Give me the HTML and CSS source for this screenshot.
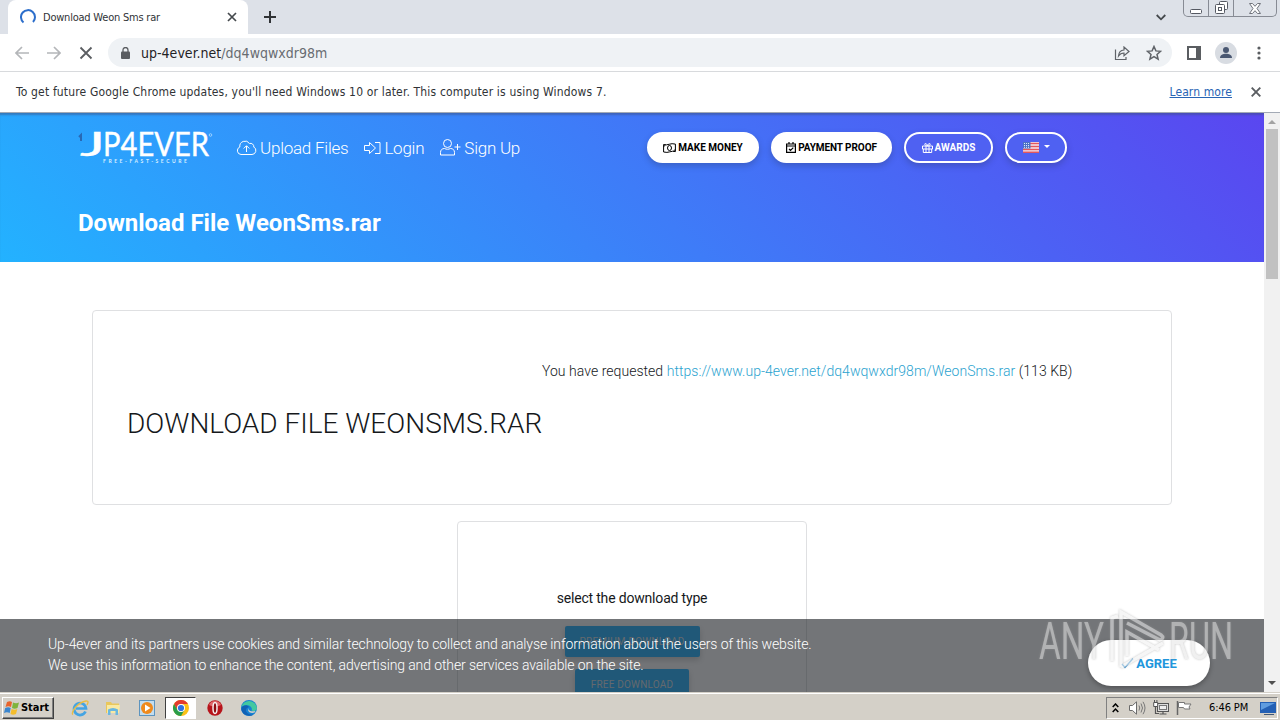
FILE: index.html
```html
<!DOCTYPE html>
<html lang="en">
<head>
    <meta charset="UTF-8">
    <meta name="viewport" content="width=device-width, initial-scale=1.0">
    <title>Download Weon Sms rar</title>
    <link rel="stylesheet" href="styles.css">
</head>
<body>
    <!-- Browser chrome -->
    <div class="tabstrip">
        <div class="tab">
            <svg class="spinner" width="16" height="16" viewBox="0 0 16 16"><path d="M3.5 13.5A7 7 0 1 1 13 13" fill="none" stroke="#2c6ecb" stroke-width="2"/></svg>
            <span class="tab-title">Download Weon Sms rar</span>
            <svg width="10" height="10" viewBox="0 0 10 10"><path d="M1 1l8 8M9 1L1 9" stroke="#45494d" stroke-width="1.7"/></svg>
        </div>
        <svg class="new-tab" width="12" height="12" viewBox="0 0 12 12"><path d="M6 0v12M0 6h12" stroke="#303336" stroke-width="2"/></svg>
        <svg class="tab-search" width="10" height="7" viewBox="0 0 10 7"><path d="M.7 1L5 5.3 9.3 1" fill="none" stroke="#45494d" stroke-width="1.8"/></svg>
        <div class="window-controls">
            <div class="control"><svg width="12" height="5" viewBox="0 0 12 5"><rect x=".5" y=".5" width="11" height="4" rx="1" fill="#fff" stroke="#555962"/></svg></div>
            <div class="control"><svg width="13" height="13" viewBox="0 0 13 13"><g fill="#fff" stroke="#555962"><rect x="4.5" y=".5" width="8" height="8" rx="1"/><rect x=".5" y="3.5" width="9" height="9" rx="1"/><rect x="3.5" y="6.5" width="3" height="3"/></g></svg></div>
            <div class="control close"><svg width="12" height="11" viewBox="0 0 12 11"><path d="M.5.5h3L6 3.3 8.5.5h3L8 5.5l3.5 5h-3L6 7.7 3.5 10.5h-3L4 5.5z" fill="#fff" stroke="#70747c"/></svg></div>
        </div>
    </div>
    <div class="toolbar">
        <svg class="nav-icon" width="14" height="14" viewBox="0 0 14 14"><path d="M14 7H1.5M7 1L1 7l6 6" fill="none" stroke="#b4b6b9" stroke-width="1.7"/></svg>
        <svg class="nav-icon" width="14" height="14" viewBox="0 0 14 14"><path d="M0 7h12.5M7 1l6 6-6 6" fill="none" stroke="#b4b6b9" stroke-width="1.7"/></svg>
        <svg class="nav-icon" width="14" height="14" viewBox="0 0 14 14"><path d="M1.5 1.5l11 11M12.5 1.5l-11 11" stroke="#5a5d61" stroke-width="1.8"/></svg>
        <div class="omnibox">
            <svg width="9" height="12" viewBox="0 0 9 12"><path d="M2 5V3a2.500 2.500 0 0 1 5 0v2" fill="none" stroke="#5a5d61" stroke-width="1.3"/><rect y="4.5" width="9" height="7.5" rx="1" fill="#5a5d61"/></svg>
            <span class="url">up-4ever.net<span class="path">/dq4wqwxdr98m</span></span>
            <svg width="16" height="14" viewBox="0 0 16 14"><g fill="none" stroke="#5f6368" stroke-width="1.2"><path d="M1.5 3.5v10H12V11"/><path d="M4.500 10c.3-4 2-5.800 5.500-6V1l5 4.500-5 4.200V7c-2.500 0-4 .8-5.500 3z"/></g></svg>
            <svg class="star" width="16" height="16" viewBox="0 0 16 16"><path d="M8 1.500l1.900 4.400 4.700.4-3.600 3.200 1.100 4.700L8 11.700l-4.100 2.500L5 9.500 1.400 6.300l4.700-.4z" fill="none" stroke="#5f6368" stroke-width="1.5"/></svg>
        </div>
        <svg class="side-panel" width="14" height="14" viewBox="0 0 14 14"><rect x="1" y="1" width="12" height="12" fill="none" stroke="#5a5d61" stroke-width="2"/><path d="M9 1h4v12H9z" fill="#5a5d61"/></svg>
        <svg class="avatar" width="22" height="22" viewBox="0 0 22 22"><circle cx="11" cy="11" r="11" fill="#d8dce2"/><circle cx="11" cy="8" r="3" fill="#4a5872"/><path d="M5 16c0-3 3-4.300 6-4.300s6 1.300 6 4.300z" fill="#4a5872"/></svg>
        <svg class="menu" width="4" height="14" viewBox="0 0 4 14"><g fill="#5a5d61"><circle cx="2" cy="2" r="1.600"/><circle cx="2" cy="7" r="1.600"/><circle cx="2" cy="12" r="1.600"/></g></svg>
    </div>
    <div class="infobar">
        <span class="message">To get future Google Chrome updates, you'll need Windows 10 or later. This computer is using Windows 7.</span>
        <a class="learn" href="#">Learn more</a>
        <svg width="10" height="10" viewBox="0 0 10 10"><path d="M.7.7l8.600 8.600M9.300.7L.7 9.300" stroke="#5a5d61" stroke-width="1.9"/></svg>
    </div>

    <!-- Page -->
    <div class="viewport">
        <div class="page">
            <header class="hero">
                <nav class="navbar">
                    <svg class="logo" width="136" height="34" viewBox="0 0 136 34">
                        <path d="M1 6l2-2v6" fill="none" stroke="#2869b5" stroke-width="2"/>
                        <text class="logo-name" x="2" y="25" textLength="25" lengthAdjust="spacingAndGlyphs">J</text>
                        <text class="logo-name" x="25" y="25" textLength="106" lengthAdjust="spacingAndGlyphs">P4EVER</text>
                        <text class="logo-tag" x="25" y="32" textLength="84">FREE-FAST-SECURE</text>
                        <circle cx="132.500" cy="4" r="1.300" fill="none" stroke="#bfe3ff" stroke-width=".7"/>
                    </svg>
                    <a class="nav-link upload" href="#"><svg width="21" height="16" viewBox="0 0 21 16"><g fill="none" stroke="#fff"><path d="M5 14.500h11a4 4 0 0 0 1.800-7.500A3.300 3.300 0 0 0 13.500 3.500 5.300 5.300 0 0 0 3.800 7 3.900 3.900 0 0 0 5 14.500z"/><path d="M10.500 12V6M7.700 8.500l2.800-2.800 2.800 2.800"/></g></svg>Upload Files</a>
                    <a class="nav-link login" href="#"><svg width="17" height="14" viewBox="0 0 17 14"><g fill="none" stroke="#fff"><path d="M.5 4.500h5v-3L11.500 7l-6 5.500v-3h-5z"/><path d="M11 1.500h5v11h-5"/></g></svg>Login</a>
                    <a class="nav-link signup" href="#"><svg width="21" height="17" viewBox="0 0 21 17"><g fill="none" stroke="#fff"><circle cx="7.500" cy="4.500" r="4"/><path d="M4.500 9.500c-2.500 0-4 1.500-4 4v2.500h14v-2.500c0-2.500-1.500-4-4-4-2 1-4 1-6 0zM17.500 5v6M14.500 8h6"/></g></svg>Sign Up</a>
                    <div class="nav-buttons">
                        <a class="btn money" href="#"><svg width="13" height="10" viewBox="0 0 13 10"><g fill="none" stroke="#000"><path d="M.6 1.500c4 1.500 7-2 11.800-.4v7.500c-4-1.500-7 2-11.800.4z"/><ellipse cx="6.500" cy="5" rx="2" ry="2.500"/><path d="M.6 3.500l2-1.500M12.400 6.500l-2 1.500"/></g></svg>Make Money</a>
                        <a class="btn proof" href="#"><svg width="10" height="11" viewBox="0 0 10 11"><path d="M.6 2h8.800v8.400H.6zM.6 4h8.800M3 0v2.500M7 0v2.500M3 7l1.500 1.500L7.300 5.700" fill="none" stroke="#000" stroke-width="1.200"/></svg>Payment Proof</a>
                        <a class="btn outline awards" href="#"><svg width="11" height="10" viewBox="0 0 11 10"><path d="M.5 3h10v3H.5zM1.300 6v3.500h8.400V6M4 3v6.500M7 3v6.500M5.500 3C3 3 2 .5 3.500.5S5.500 3 5.500 3s.5-2.500 2-2.500S8 3 5.500 3z" fill="none" stroke="#fff"/></svg>Awards</a>
                        <a class="btn outline lang" href="#"><svg width="16" height="11" viewBox="0 0 16 11"><rect width="16" height="11" fill="#f5e9ee"/><path d="M7 1.500h9M7 4.500h9M0 7.500h16M0 10.200h16" stroke="#e2575e" stroke-width="1.400"/><rect width="7.500" height="6.500" fill="#4c72c4"/><path d="M1 1.500h6M1 3.500h6M1 5.300h6" stroke="#dfe8ff" stroke-dasharray="1 1"/></svg><span class="caret"></span></a>
                    </div>
                </nav>
                <h1>Download File WeonSms.rar</h1>
            </header>
            <main>
                <section class="card file-card">
                    <h2>Download File WeonSms.rar</h2>
                    <p>You have requested <a href="#">https://www.up-4ever.net/dq4wqwxdr98m/WeonSms.rar</a> (113 KB)</p>
                </section>
                <section class="card type-card">
                    <p>select the download type</p>
                    <button class="download premium">Premium Download</button>
                    <button class="download free">Free Download</button>
                </section>
            </main>
            <div class="cookies">
                <p>Up-4ever and its partners use cookies and similar technology to collect and analyse information about the users of this website.<br>We use this information to enhance the content, advertising and other services available on the site.</p>
                <button class="agree"><svg width="13" height="12" viewBox="0 0 13 12"><path d="M1 7l3 3.500L12 1.500" fill="none" stroke="#4f9bd1" stroke-width="1.400"/></svg>Agree</button>
            </div>
        </div>
        <div class="scrollbar">
            <span class="arrow up"></span>
            <span class="thumb"></span>
            <span class="arrow down"></span>
        </div>
    </div>

    <!-- Taskbar -->
    <footer class="taskbar">
        <div class="start">
            <svg width="16" height="16" viewBox="0 0 16 16"><path d="M3 2q3-1.500 5 0L7 7q-2.500-1.500-5.500 0z" fill="#e8642c"/><path d="M9 2.500q3 1.500 6 0L13.500 8q-3 1.500-5.500 0z" fill="#7fb43c"/><path d="M1.200 8q3-1.500 5.500 0l-1 5Q3 11.500 0 13z" fill="#3b86cf"/><path d="M7.600 9q3 1.500 5.700 0L12 14q-3 1.500-5.500 0z" fill="#f4bd2c"/></svg>Start
        </div>
        <svg class="task ie" width="18" height="18" viewBox="0 0 18 18"><path d="M14.500 12.500A6 6 0 1 1 15 9.500H5" fill="none" stroke="#44a4e3" stroke-width="2.700"/><path d="M2 15.500C-1 14 7 3 15 2c3-.2 2 2 1 4" fill="none" stroke="#e9bd45" stroke-width="1.400"/></svg>
        <svg class="task folder" width="16" height="16" viewBox="0 0 16 16"><path d="M1 2h5l1 1.500h7V13H1z" fill="#e9c75c"/><path d="M2 5h13l-1 8H2z" fill="#f9e9a2"/><path d="M3 15V9.500q5-3 10 0V15h-2.500v-4h-5v4z" fill="#69b7e0"/></svg>
        <svg class="task player" width="16" height="16" viewBox="0 0 16 16"><rect x=".5" y=".5" width="15" height="15" fill="#c3ddef" stroke="#5d94bf"/><circle cx="8" cy="8" r="6" fill="#ef8a1d"/><path d="M6 4.500v7L11.500 8z" fill="#fff"/></svg>
        <div class="task-active">
            <svg width="16" height="16" viewBox="0 0 16 16"><circle cx="8" cy="8" r="8" fill="#fbc116"/><path d="M1.070 4A8 8 0 0 1 14.930 4H8L4.500 10z" fill="#e33b2e"/><path d="M1.070 4A8 8 0 0 0 8 16l3.500-6L8 11.500 4.500 10z" fill="#2a9d4a"/><circle cx="8" cy="8" r="4" fill="#fff"/><circle cx="8" cy="8" r="3.100" fill="#2f73e0"/></svg>
        </div>
        <svg class="task opera" width="16" height="16" viewBox="0 0 16 16"><circle cx="8" cy="8" r="7.700" fill="#b7141b"/><path d="M2 5a6.500 6.500 0 0 1 12 0q-6 3-12 0z" fill="#df686b"/><ellipse cx="8" cy="8" rx="2" ry="5.500" fill="#8c0c10" stroke="#f5eeee" stroke-width="1.500"/></svg>
        <svg class="task edge" width="16" height="16" viewBox="0 0 16 16"><circle cx="8" cy="8" r="8" fill="#1682d3"/><path d="M.3 7A8 8 0 0 1 16 8c0 3-4 3.500-5.500 2.500C12 8 9 5 6 5.300 3 5.500 1 6 .3 7z" fill="#43c8a0"/><path d="M6 8c-3 3 1 7.500 6.500 6.500A8 8 0 0 1 .2 9C1 5 6 4 8 7z" fill="#1262b5"/><path d="M8 7.500c-1.500 2 .5 4.500 6.500 3.500l-1 1.500C9 14 5.500 11 8 7.500z" fill="#d4d0c8"/></svg>
        <div class="tray">
            <svg class="expand" width="7" height="10" viewBox="0 0 7 10"><path d="M.7 4l2.800-3 2.800 3M.7 9l2.800-3 2.800 3" fill="none" stroke="#000" stroke-width="1.500"/></svg>
            <svg class="volume" width="17" height="14" viewBox="0 0 17 14"><path d="M.5 4.500h3L7.500.8v12.400l-4-3.700h-3z" fill="#fff" stroke="#6b6b6b"/><path d="M10 4.500q1.500 2.500 0 5M12 2.500q3 4.500 0 9M14 .8q4 6.200 0 12.400" fill="none" stroke="#777"/></svg>
            <svg class="network" width="16" height="15" viewBox="0 0 16 15"><rect x="4.500" y="3.500" width="11" height="8" fill="#ddd" stroke="#555"/><rect x="6.500" y="5.500" width="7" height="4" fill="#eee" stroke="#777"/><path d="M6.500 14h7M10 11.500V14M2.500 7v6.500H6" fill="none" stroke="#555" stroke-width="1.200"/><path d="M.7 2.500h4v4h-4zM1.500 0v2.500M3.900 0v2.500" fill="#fff" stroke="#555"/></svg>
            <svg class="flag" width="16" height="14" viewBox="0 0 16 14"><path d="M1.500 0v14" stroke="#666" stroke-width="1.500"/><path d="M2.500 1.500h6v1.500h6.500l-2 3 1 2H8.500L7.500 6.500h-5z" fill="#fff" stroke="#777"/></svg>
            <span class="clock">6:46 PM</span>
            <svg class="desktop" width="16" height="14" viewBox="0 0 16 14"><rect y="1" width="16" height="11" fill="#2460b4"/><path d="M1 2h14L1 9z" fill="#5f9cdf"/><path d="M4 13.500h10" stroke="#405776"/></svg>
        </div>
    </footer>

    <svg class="watermark" width="196" height="68" viewBox="0 0 196 68">
        <g class="mark-text">
            <text x="2" y="52" textLength="65" lengthAdjust="spacingAndGlyphs">ANY</text>
            <text x="132" y="52" textLength="64" lengthAdjust="spacingAndGlyphs">RUN</text>
        </g>
        <path class="mark-play" d="M81 9l-6 2v43M84 60V5L124 28Q128 31 123 33L90 16M84 60L126 36M90 49V25l32 18"/>
    </svg>
</body>
</html>
```
FILE: styles.css
```css
* {
    box-sizing: border-box;
}

body {
    margin: 0;
    width: 1280px;
    height: 720px;
    overflow: hidden;
    position: relative;
    display: flex;
    flex-direction: column;
    font-family: "DejaVu Sans Condensed", "DejaVu Sans", sans-serif;
    font-size: 12px;
    color: #303336;
    background: #fff;
}

svg {
    display: block;
    flex: none;
}

a {
    text-decoration: none;
}

h1, h2, p {
    margin: 0;
}

/* tabs */
.tabstrip {
    height: 34px;
    flex: none;
    display: flex;
    align-items: center;
    padding-left: 8px;
    background: #dde1e8;
}

.tab {
    width: 240px;
    height: 34px;
    display: flex;
    align-items: center;
    padding: 0 11px 0 12px;
    border-radius: 8px 8px 0 0;
    background: #fff;
}

.tab-title {
    flex: 1;
    margin-left: 7px;
    font-size: 11px;
    letter-spacing: -0.22px;
}

.new-tab {
    margin-left: 16px;
}

.tab-search {
    margin-left: auto;
}

.window-controls {
    display: flex;
    align-self: flex-start;
    height: 17px;
    margin: 0 3px 0 17px;
    border: 1px solid #878b94;
    border-top: 0;
    border-radius: 0 0 5px 5px;
}

.control {
    width: 25px;
    display: flex;
    align-items: flex-end;
    justify-content: center;
    padding-bottom: 2px;
    border-right: 1px solid #878b94;
}

.control.close {
    width: 42px;
    border-right: 0;
}

/* toolbar */
.toolbar {
    height: 38px;
    flex: none;
    display: flex;
    align-items: center;
    padding: 0 19px 0 15px;
    border-bottom: 1px solid #d8dadd;
}

.nav-icon {
    margin-right: 18px;
}

.omnibox {
    flex: 1;
    height: 29px;
    display: flex;
    align-items: center;
    margin-left: -3px;
    padding: 0 10px 0 13px;
    border-radius: 15px;
    background: #eff2f5;
}

.url {
    flex: 1;
    margin-left: 11px;
    font-size: 14px;
    letter-spacing: 0.02px;
    color: #1f2225;
}

.url .path {
    color: #686c71;
}

.star {
    margin-left: 16px;
}

.side-panel {
    margin-left: 15px;
}

.avatar {
    margin-left: 14px;
}

.menu {
    margin-left: 20px;
}

.infobar {
    height: 41px;
    flex: none;
    display: flex;
    align-items: center;
    padding: 0 19px 1px 16px;
    border-bottom: 1px solid #a3aab5;
}

.message {
    flex: 1;
    letter-spacing: 0.165px;
}

.learn {
    margin-right: 19px;
    letter-spacing: 0.1px;
    color: #2864b4;
    text-decoration: underline;
}

/* page */
.viewport {
    flex: 1;
    min-height: 0;
    display: flex;
}

.page {
    width: 1264px;
    position: relative;
    overflow: hidden;
    font-family: Roboto, sans-serif;
    font-size: 14px;
    font-weight: 300;
    color: #15181b;
}

.hero {
    height: 149px;
    padding: 16px 197px 0 78px;
    color: #fff;
    background: linear-gradient(45deg, #23b2ff, #3e7cf8 50%, #5a46f0);
    box-shadow: inset 0 3px 2px -1px rgba(60, 80, 130, 0.5);
}

.navbar {
    height: 37px;
    display: flex;
    align-items: center;
}

.nav-link {
    display: flex;
    align-items: center;
    gap: 3px;
    font-size: 17px;
    letter-spacing: -0.24px;
    color: #fff;
}

.upload {
    margin-left: 22px;
}

.login,
.signup {
    margin-left: 16px;
}

.nav-buttons {
    margin-left: auto;
    display: flex;
    gap: 12px;
}

.btn {
    height: 31px;
    display: flex;
    align-items: center;
    justify-content: center;
    gap: 2px;
    border: 2px solid #fff;
    border-radius: 16px;
    background: #fff;
    color: #000;
    font-size: 10px;
    font-weight: 700;
    text-transform: uppercase;
    box-shadow: 0 3px 6px rgba(40, 50, 90, 0.3);
}

.btn.outline {
    background: #4f61f2;
    color: #fff;
}

.money {
    width: 112px;
}

.proof {
    width: 121px;
    letter-spacing: -0.08px;
}

.awards {
    width: 89px;
}

.lang {
    width: 62px;
}

.caret {
    margin: -3px 0 0 3px;
    border: 3px solid transparent;
    border-top-color: #fff;
    border-bottom: 0;
}

.logo-name {
    font-family: Lato, sans-serif;
    font-size: 32px;
    font-weight: 400;
    fill: #fff;
    stroke: #fff;
    stroke-width: 0.4px;
}

.logo-tag {
    font-family: Lato, sans-serif;
    font-size: 5px;
    font-weight: 700;
    fill: #d9efff;
}

h1 {
    margin-top: 42px;
    font-size: 24px;
    line-height: 30px;
    font-weight: 700;
}

.card {
    border: 1px solid #dfe0e2;
    border-radius: 4px;
    background: #fff;
}

.file-card {
    width: 1080px;
    height: 195px;
    margin: 48px 0 16px 92px;
    padding: 50px 0 0 34px;
    display: flex;
}

h2 {
    width: 415px;
    padding-top: 43px;
    font-size: 28px;
    line-height: 40px;
    font-weight: 300;
    text-transform: uppercase;
    white-space: nowrap;
}

.file-card p {
    line-height: 21px;
    letter-spacing: 0.04px;
    white-space: nowrap;
}

.file-card a {
    color: #2ba3cf;
}

.type-card {
    width: 350px;
    height: 240px;
    margin-left: 457px;
    padding-top: 66px;
    display: flex;
    flex-direction: column;
    align-items: center;
}

.type-card p {
    margin-bottom: 17px;
    line-height: 21px;
    font-weight: 400;
    letter-spacing: -0.18px;
}

.download {
    height: 31px;
    margin-bottom: 12px;
    padding: 0;
    border: 0;
    border-radius: 2px;
    background: #1fb1ff;
    color: #d5dde2;
    font: 400 10px Roboto, sans-serif;
    letter-spacing: 0.2px;
    text-transform: uppercase;
    box-shadow: 0 3px 6px rgba(0, 0, 0, 0.2);
}

.premium {
    width: 135px;
}

.free {
    width: 114px;
}

/* cookie notice lies over the page */
.cookies {
    position: absolute;
    left: 0;
    right: 0;
    bottom: 0;
    height: 73px;
    display: flex;
    justify-content: space-between;
    padding: 15px 54px 0 48px;
    background: rgba(33, 37, 41, 0.63);
    color: #fff;
    line-height: 21px;
    letter-spacing: -0.11px;
}

.agree {
    width: 122px;
    height: 46px;
    margin-top: 6px;
    display: flex;
    align-items: center;
    justify-content: center;
    gap: 2px;
    border: 0;
    border-radius: 23px;
    background: #fff;
    color: #2196dc;
    font: 700 13px Roboto, sans-serif;
    text-transform: uppercase;
    box-shadow: 0 2px 5px rgba(0, 0, 0, 0.3);
}

.scrollbar {
    width: 16px;
    display: flex;
    flex-direction: column;
    align-items: center;
    padding: 7px 0;
    background: #f1f1f1;
}

.arrow {
    border: 4px solid transparent;
}

.arrow.up {
    border-top: 0;
    border-bottom-color: #a3a3a3;
}

.arrow.down {
    margin-top: auto;
    border-bottom: 0;
    border-top-color: #505050;
}

.thumb {
    width: 12px;
    height: 150px;
    margin-top: 5px;
    background: #c1c1c1;
}

/* taskbar */
.taskbar {
    height: 28px;
    flex: none;
    display: flex;
    align-items: center;
    padding: 2px 2px 0 2px;
    border-top: 1px solid #d4d0c8;
    background: #d4d0c8;
    box-shadow: inset 0 1px #fff;
    color: #000;
}

.start {
    width: 52px;
    height: 22px;
    display: flex;
    align-items: center;
    gap: 1px;
    padding-left: 1px;
    border: 1px solid;
    border-color: #fff #404040 #404040 #fff;
    box-shadow: inset -1px -1px #808080;
    font-size: 11px;
    font-weight: 700;
    letter-spacing: -0.05px;
}

.ie {
    margin-left: 17px;
}

.folder {
    margin-left: 16px;
}

.player {
    margin-left: 18px;
}

.task-active {
    width: 31px;
    height: 22px;
    margin-left: 10px;
    display: flex;
    align-items: center;
    justify-content: center;
    border: 1px solid;
    border-color: #404040 #fff #fff #404040;
    background: #fff;
}

.opera {
    margin-left: 11px;
}

.edge {
    margin-left: 18px;
}

.tray {
    width: 172px;
    height: 22px;
    margin-left: auto;
    display: flex;
    align-items: center;
    padding: 0 1px 0 5px;
    border: 1px solid;
    border-color: #808080 #fff #fff #808080;
}

.volume {
    margin-left: 10px;
}

.network {
    margin-left: 7px;
}

.flag {
    margin-left: 7px;
}

.clock {
    margin-left: 17px;
    font-size: 11px;
    letter-spacing: -0.1px;
    white-space: nowrap;
}

.desktop {
    margin-left: auto;
}

.watermark {
    position: absolute;
    left: 1037px;
    top: 607px;
    opacity: 0.55;
    filter: drop-shadow(0 0 1px #999);
}

.mark-text {
    font-family: Roboto, sans-serif;
    font-size: 52px;
    font-weight: 400;
    fill: #e4e4e4;
}

.mark-play {
    fill: none;
    stroke: #f0f0f0;
    stroke-width: 3.5;
}
```
